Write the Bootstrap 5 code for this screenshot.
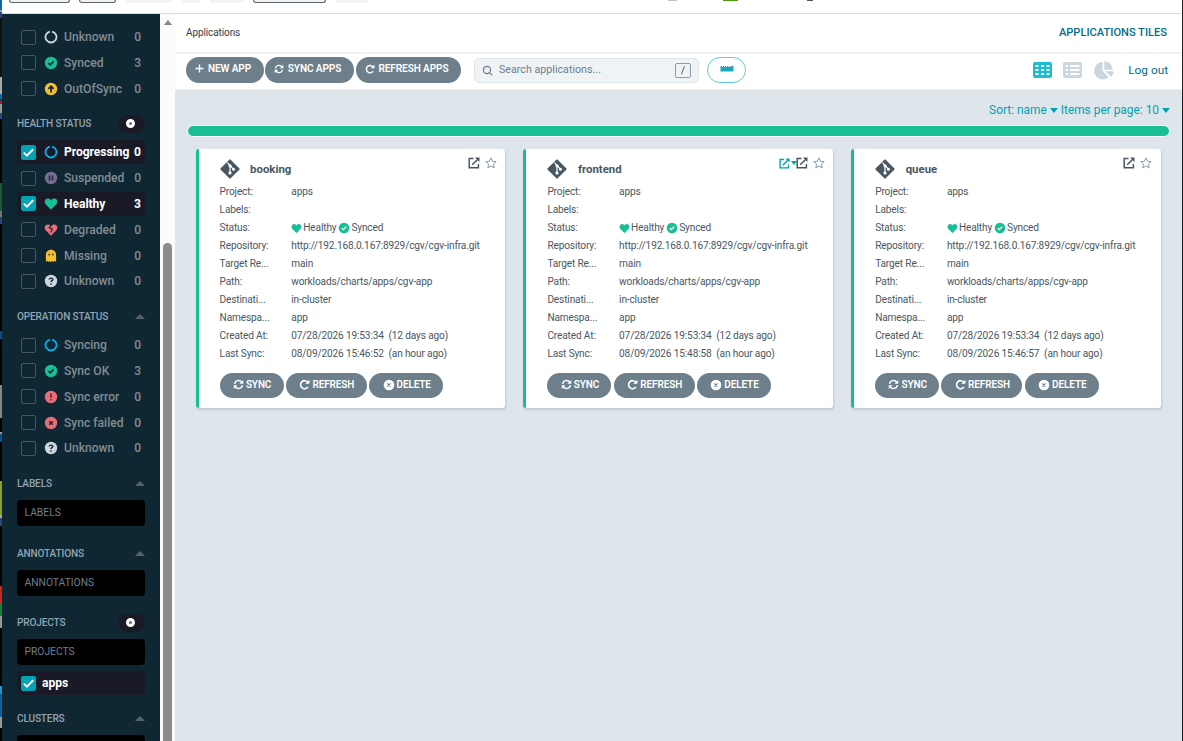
<!DOCTYPE html>
<html lang="en">
<head>
<meta charset="utf-8">
<meta name="viewport" content="width=device-width, initial-scale=1">
<title>Applications Tiles</title>
<link href="https://cdn.jsdelivr.net/npm/bootstrap@5.3.0/dist/css/bootstrap.min.css" rel="stylesheet">
<style>
body{font-family:Roboto,"Liberation Sans",sans-serif;font-size:10.1px;letter-spacing:-.14px;line-height:18px;color:#495763;width:1183px;height:741px;overflow:hidden;background:#fff}
svg{display:block;flex:none;fill:currentColor}
.desk-edge{width:2px;background:linear-gradient(#0a69a8 0 10px,#9aa3ad 10px 12px,#274a7b 12px 18px,#111 18px 77px,#aaa 77px 94px,#0a69a8 94px 99px,#333 99px 101px,#b5124a 101px 104px,#999 104px 113px,#274a7b 113px 119px,#000 119px 183px,#1c5c33 183px 211px,#777 211px 217px,#274a7b 217px 224px,#000 224px 331px,#0a4f8c 331px 339px,#000 339px 385px,#888 385px 418px,#000 418px 432px,#999 432px 434px,#0a4f8c 434px 442px,#000 442px 481px,#8aa02c 481px 515px,#aaa 515px 518px,#274a7b 518px 526px,#000 526px 586px,#c22a1c 586px 604px,#17803a 604px 616px,#999 616px 628px,#000 628px 686px,#2196c4 686px 694px,#0a5fa5 694px 717px,#999 717px 728px,#000 728px)}
.win-edge{width:1px;background:#1d2226}
.tabstrip{height:14px;border-bottom:1px solid #dcdddd}
.chip{height:3px;background:#f1f3f5;border-radius:0 0 6px 6px;flex:none}
.chip.lined{border:1px solid #5c626a;border-top:0}
.side{width:158px;background:#0f2733;padding:11px 15px 0;overflow:hidden;letter-spacing:0}
.side>*{flex:none}
.filter{height:24px;margin-bottom:1.8px;padding:0 4px;border-radius:3px;color:#818d94;font-size:12.1px;font-weight:500;line-height:24px}
.filter.on{background:#1a1a26;color:#fff;font-weight:700;letter-spacing:-.05px}
.filter .box{width:15px;height:15px;border:1px solid #495763;border-radius:2px;flex:none;color:#fff}
.filter.on .box{background:#00a2b3;border-color:#00a2b3}
.filter .ico{margin:0 6px 0 8px;width:14px;height:14px;flex:none}
.side h6{margin:13px 0 7px;height:18px;font-size:10.1px;letter-spacing:-.17px;line-height:18px;font-weight:500;color:#8fa4b1;text-transform:uppercase}
.side h6.far{margin-top:18.4px}
.knob{width:27px;height:18px;border-radius:9px;background:#1a1a26}
.knob i{width:9px;height:9px;border-radius:50%;border:3px solid #fff;background:#6a6a78;margin:0 2px 1px 0}
.caret-up{border:5px solid transparent;border-bottom-color:#56636d;border-top:0;margin-bottom:1px}
.field{height:26px;border-radius:4px;background:#000;color:#6d7f8b;padding:0 7.5px;line-height:25px;font-size:10.3px}
.track{width:15px;background:#fbfbfb}
.arrow{border:4.5px solid transparent;border-bottom:5px solid #858585;border-top:0;margin-top:6px}
.thumb{width:9px;margin-top:218px;background:#8b8b8b;border-radius:5px 5px 0 0}
.head{height:38px;padding:0 15px 0 11px;color:#363c4a}
.crumb{font-size:10px;letter-spacing:-.1px}
.tools{height:38px;border-top:2px solid #eff2f6;border-bottom:1px solid #eaeef2;padding:0 14px 3px 11px}
.pill{background:#6d7f8b;color:#fff;border:0;border-radius:13px;height:26px;font-size:10.1px;letter-spacing:-.12px;font-weight:600;line-height:24px;padding:0 0 2px;display:flex;align-items:center;justify-content:center}
.tools .pill{padding:0 4px 3px 0}
.pill.sm{height:25px;font-size:10px;padding-left:1px}
.search{width:225px;height:25px;border:1px solid #dee6ec;border-radius:5px;background:#eff3f6;color:#6d7f8b;font-size:10.7px;letter-spacing:0;padding:0 7px}
.key{width:16px;height:15px;border:1px solid #8a9ba8;border-radius:2px;line-height:13px;color:#495763}
.ruler{width:39px;height:26px;border:1px solid #5fcbd8;border-radius:13px;color:#18a7bd;background:#fff}
.canvas{background:#dee6ec}
.sortbar{height:33px;color:#00a2b3;font-size:11.9px;letter-spacing:0;padding:7px 12px 0 0;line-height:27px}
.caret-dn{border:4px solid transparent;border-top:5px solid currentColor;border-bottom:0}
.healthbar{height:12px;margin:2px 12px 12px;border:1px solid #fff;border-radius:6px;background:#18be94}
.tiles{padding:0 21px 0 20.6px;gap:18px}
.tile{height:259px;border-left:3px solid #18be94;border-radius:3px;background:#fff;box-shadow:1px 2px 3px rgba(0,0,0,.13);padding:9px 9px 0 21px;position:relative;min-width:0}
.tile-title{font-size:11.4px;letter-spacing:0;font-weight:700;height:22px;color:#495763}
.tile dl{margin:3px 0 0;display:grid;grid-template-columns:71.7px 1fr;grid-auto-rows:18px;height:180px}
.tile dt{font-weight:400}.tile dd{margin:0}
.tile dl *{white-space:nowrap}
.tile-links{position:absolute;top:7px;right:8.6px;height:14px}
</style>
</head>
<body>
<svg width="0" height="0" class="position-absolute">
<symbol id="ring" viewBox="0 0 14 14"><path d="M8 1.6a5.5 5.5 0 1 1-2 0" fill="none" stroke="currentColor" stroke-width="1.8"/></symbol>
<symbol id="ok" viewBox="0 0 14 14"><circle cx="7" cy="7" r="6.2"/><path d="M4.4 7.1l1.8 1.8 3.5-3.5" fill="none" stroke="var(--k,#0f2733)" stroke-width="1.5"/></symbol>
<symbol id="up" viewBox="0 0 14 14"><circle cx="7" cy="7" r="6.2"/><path d="M7 10.5V5M4.4 6.9L7 4.2l2.6 2.7" fill="none" stroke="#0f2733" stroke-width="1.7"/></symbol>
<symbol id="pause" viewBox="0 0 14 14"><circle cx="7" cy="7" r="6.2"/><path d="M4.6 4.6h1.8v4.8H4.6zM7.6 4.6h1.8v4.8H7.6z" fill="#2d2f45"/></symbol>
<symbol id="heart" viewBox="0 0 14 14"><path d="M7 12.7L1.6 7.2C.2 5.7.4 3.2 1.9 2.1 3.4.9 5.5 1.3 7 3c1.5-1.7 3.600-2.100 5.100-.9 1.500 1.100 1.700 3.600.3 5.100z"/></symbol>
<symbol id="broken" viewBox="0 0 14 14"><path d="M7 12.700L1.600 7.200C.2 5.700.4 3.200 1.900 2.100 3.400.9 5.500 1.300 7 3c1.500-1.700 3.600-2.100 5.100-.9 1.500 1.100 1.700 3.600.3 5.100z"/><path d="M7.400 2L5.300 4.800l3 1.500L6.600 9.600" fill="none" stroke="#0f2733" stroke-width="1.100"/></symbol>
<symbol id="ghost" viewBox="0 0 14 14"><path d="M7 .8C4 .8 1.900 3 1.900 5.900v7l1.400-1.100 1.300 1.300L5.800 12 7 13.200 8.200 12l1.200 1.100 1.300-1.300 1.400 1.100v-7C12.100 3 10 .8 7 .8z"/><circle cx="5.200" cy="5.600" r="1" fill="#5c4a1a"/><circle cx="8.800" cy="5.600" r="1" fill="#5c4a1a"/></symbol>
<symbol id="ask" viewBox="0 0 14 14"><circle cx="7" cy="7" r="6.200"/><path d="M5.200 5.500C5.500 3.600 8.900 3.700 8.800 5.600 8.700 6.700 7 6.700 7 8.100M7 9.200v1.500" fill="none" stroke="#0f2733" stroke-width="1.400"/></symbol>
<symbol id="bang" viewBox="0 0 14 14"><circle cx="7" cy="7" r="6.200"/><path d="M7 3.400v4.400M7 8.900v1.600" stroke="#4a2530" stroke-width="1.500"/></symbol>
<symbol id="cross" viewBox="0 0 14 14"><circle cx="7" cy="7" r="6.200"/><path d="M5.200 5.200l3.600 3.600M8.800 5.200L5.200 8.800" stroke="var(--k,#0f2733)" stroke-width="1.300"/></symbol>
<symbol id="tick" viewBox="0 0 13 13"><path d="M1.800 6.600l3.100 3L11.200 3.200" fill="none" stroke="#fff" stroke-width="2"/></symbol>
<symbol id="plus" viewBox="0 0 10 10"><path d="M5 .6v8.800M.6 5h8.800" stroke="currentColor" stroke-width="1.500"/></symbol>
<symbol id="sync" viewBox="0 0 12 12"><path d="M1.700 5.300A4.300 4.300 0 0 1 9.600 3.700M10.300 6.700A4.300 4.300 0 0 1 2.400 8.300" fill="none" stroke="currentColor" stroke-width="1.500"/><path d="M11.200 1v4.200H7zM.8 11V6.800H5z"/></symbol>
<symbol id="redo" viewBox="0 0 12 12"><path d="M9.800 8.600A4.400 4.400 0 1 1 9.500 3.400" fill="none" stroke="currentColor" stroke-width="1.700"/><path d="M11.300.8v4.400H6.900z"/></symbol>
<symbol id="git" viewBox="0 0 20 20"><path d="M10 .9L19.100 10 10 19.100.9 10z" stroke="currentColor" stroke-width="1.200" stroke-linejoin="round"/><path d="M7.400 3.600l2.600 2.700v7.600M10 6.500l3.400 3.600" fill="none" stroke="#fff" stroke-width="1.200"/><circle cx="10" cy="6.700" r="1.500" fill="#fff"/><circle cx="10" cy="13.900" r="1.600" fill="#fff"/><circle cx="13.500" cy="10.200" r="1.500" fill="#fff"/></symbol>
<symbol id="ext" viewBox="0 0 12 12"><path d="M5.500 1.600H1.200v9.200h9.200V7M4.200 7.800l5.600-5.600" fill="none" stroke="currentColor" stroke-width="1.500"/><path d="M7 .5h4.500V5z"/></symbol>
<symbol id="star" viewBox="0 0 12 12"><path d="M6 .9l1.500 3.400 3.700.4-2.800 2.500.8 3.700L6 9l-3.200 1.900.8-3.700L.8 4.700l3.700-.4z" fill="none" stroke="currentColor" stroke-width="1"/></symbol>
</svg>
<div class="d-flex h-100">
  <div class="desk-edge flex-shrink-0"></div>
  <div class="d-flex flex-column flex-grow-1" style="min-width:0">
    <div class="tabstrip d-flex flex-shrink-0">
      <div class="chip lined" style="width:61px;margin-left:7px"></div><div class="chip lined" style="width:37px;margin-left:9px"></div>
      <div class="chip" style="width:47px;margin-left:9px"></div><div class="chip" style="width:19px;margin-left:9px"></div>
      <div class="chip" style="width:35px;margin-left:9px"></div><div class="chip lined" style="width:73px;margin-left:9px"></div>
      <div class="chip" style="width:33px;margin-left:9px"></div>
      <div style="width:9px;height:1px;margin-left:300px;background:#c4c2d0"></div><div style="width:15px;height:1px;margin-left:46px;background:#4c9a12"></div>
      <div style="width:6px;height:1px;margin-left:69px;background:#555"></div>
    </div>
    <div class="d-flex flex-grow-1" style="min-height:0">
      <aside class="side flex-shrink-0 d-flex flex-column" id="side"></aside>
      <div class="track flex-shrink-0 d-flex flex-column align-items-center"><div class="arrow"></div><div class="thumb flex-grow-1"></div></div>
      <main class="flex-grow-1 d-flex flex-column" style="min-width:0">
        <div class="head d-flex align-items-center justify-content-between flex-shrink-0"><span class="crumb">Applications</span><span style="color:#006f8a;font-size:11.1px;letter-spacing:0;font-weight:500">APPLICATIONS TILES</span></div>
        <div class="tools d-flex align-items-center flex-shrink-0">
          <button class="pill gap-1" style="width:78px"><svg width="9" height="9"><use href="#plus"/></svg>NEW APP</button>
          <button class="pill gap-1" style="width:89px;margin-left:1px"><svg width="10" height="10"><use href="#sync"/></svg>SYNC APPS</button>
          <button class="pill gap-1" style="width:105px;margin-left:2px"><svg width="10" height="10"><use href="#redo"/></svg>REFRESH APPS</button>
          <div class="search d-flex align-items-center" style="margin-left:13px"><svg width="11" height="11" viewBox="0 0 11 11"><path d="M7.600 7.600l2.700 2.700M8.600 5a3.600 3.600 0 1 1-7.200 0 3.600 3.600 0 0 1 7.200 0z" fill="none" stroke="currentColor" stroke-width="1.200"/></svg><span style="margin:-1px 0 0 6px">Search applications...</span><span class="key text-center ms-auto">/</span></div>
          <div class="ruler d-flex align-items-center justify-content-center" style="margin-left:8px"><svg width="14" height="6" viewBox="0 0 14 6" style="margin-bottom:3px"><path d="M.5 0h1.500v1h1V0h1v1h1V0h1v1h1V0h1v1h1V0h1v1h1V0h2.500v5q0 .6-.6.6H1.100q-.6 0-.6-.6z"/></svg></div>
          <svg class="ms-auto" width="19" height="16" viewBox="0 0 19 16" style="color:#1bbdd0"><path fill-rule="evenodd" d="M2 0h15a2 2 0 0 1 2 2v12a2 2 0 0 1-2 2H2a2 2 0 0 1-2-2V2a2 2 0 0 1 2-2zM2.500 3v2h3V3zM8 3v2h3V3zM13.500 3v2h3V3zM2.500 7v2h3V7zM8 7v2h3V7zM13.500 7v2h3V7zM2.500 11v2h3v-2zM8 11v2h3v-2zM13.500 11v2h3v-2z"/></svg>
          <svg width="19" height="16" viewBox="0 0 19 16" style="color:#ccd6dd;margin-left:11px"><path fill-rule="evenodd" d="M2 0h15a2 2 0 0 1 2 2v12a2 2 0 0 1-2 2H2a2 2 0 0 1-2-2V2a2 2 0 0 1 2-2zM2.500 3v2h2.500V3zM7 3v2h9.500V3zM2.500 7v2h2.500V7zM7 7v2h9.500V7zM2.500 11v2h2.500v-2zM7 11v2h9.500v-2z"/></svg>
          <svg width="20" height="19" viewBox="0 0 20 19" style="color:#ccd6dd;margin-left:12px"><path d="M8.600 1v8.900l6.100 6.200A8.700 8.700 0 1 1 8.600 1zM10.300.2a8.700 8.700 0 0 1 8.500 8.500h-8.500zM11.500 10.200h8.200a8.700 8.700 0 0 1-2.500 5.500z"/></svg>
          <span style="color:#006f8a;font-size:11.8px;letter-spacing:0;margin-left:14px">Log out</span>
        </div>
        <div class="canvas flex-grow-1">
          <div class="sortbar d-flex justify-content-end align-items-center"><span>Sort: name</span><span class="caret-dn" style="margin:0 3px"></span><span>Items per page: 10</span><span class="caret-dn" style="margin-left:3px"></span></div>
          <div class="healthbar"></div>
          <div class="tiles d-flex" id="tiles"></div>
        </div>
      </main>
    </div>
  </div>
  <div class="win-edge flex-shrink-0"></div>
</div>
<script src="https://cdn.jsdelivr.net/npm/bootstrap@5.3.0/dist/js/bootstrap.bundle.min.js"></script>
<script>
const icon = (id, w, color, h = w) => `<svg width="${w}" height="${h}"${color ? ` style="color:${color}"` : ''}><use href="#${id}"/></svg>`;
const filter = (id, color, name, n, on) => `<div class="filter d-flex align-items-center${on ? ' on' : ''}"><span class="box">${on ? icon('tick', 13) : ''}</span><span class="ico">${icon(id, 14, color)}</span><span>${name}</span><span class="ms-auto">${n}</span></div>`;
const heading = (t, knob, far) => `<h6 class="d-flex align-items-center justify-content-between${far ? ' far' : ''}"><span>${t}</span>${knob ? '<span class="knob d-flex align-items-center justify-content-center"><i></i></span>' : '<span class="caret-up"></span>'}</h6>`;
const field = t => `<div class="field">${t}</div>`;
const green = '#18be94', blue = '#0dadea', red = '#e96d76', pale = '#ccd6dd', gold = '#f4c030';
document.getElementById('side').innerHTML =
  filter('ring', pale, 'Unknown', 0) + filter('ok', green, 'Synced', 3) + filter('up', gold, 'OutOfSync', 0) +
  heading('Health status', true) +
  filter('ring', blue, 'Progressing', 0, true) + filter('pause', '#766f94', 'Suspended', 0) + filter('heart', green, 'Healthy', 3, true) +
  filter('broken', red, 'Degraded', 0) + filter('ghost', gold, 'Missing', 0) + filter('ask', pale, 'Unknown', 0) +
  heading('Operation status') +
  filter('ring', blue, 'Syncing', 0) + filter('ok', green, 'Sync OK', 3) + filter('bang', red, 'Sync error', 0) +
  filter('cross', red, 'Sync failed', 0) + filter('ask', pale, 'Unknown', 0) +
  heading('Labels') + field('LABELS') + heading('Annotations', false, true) + field('ANNOTATIONS') +
  heading('Projects', true, true) + field('PROJECTS') +
  `<div class="filter on d-flex align-items-center" style="margin-top:6.5px"><span class="box">${icon('tick', 13)}</span><span style="margin-left:6px">apps</span></div>` +
  heading('Clusters') + field('');

const apps = [['booking', '15:46:52'], ['frontend', '15:48:58', true], ['queue', '15:46:57']];
document.getElementById('tiles').innerHTML = apps.map(([name, time, link]) => {
  const rows = [['Project:', 'apps'], ['Labels:', ''],
    ['Status:', `<span class="d-flex align-items-center" style="--k:#fff">${icon('heart', 11, green)}<span style="margin:0 2px 0 1px">Healthy</span>${icon('ok', 12, green)}<span style="margin-left:1px">Synced</span></span>`],
    ['Repository:', 'http://192.168.0.167:8929/cgv/cgv-infra.git'], ['Target Re...', 'main'], ['Path:', 'workloads/charts/apps/cgv-app'],
    ['Destinati...', 'in-cluster'], ['Namespa...', 'app'], ['Created At:', '07/28/2026 19:53:34&nbsp; (12 days ago)'], ['Last Sync:', `08/09/2026 ${time}&nbsp; (an hour ago)`]];
  return `<section class="tile flex-fill w-100">
    <div class="tile-title d-flex align-items-center">${icon('git', 20)}<span style="margin-left:10.500px">${name}</span></div>
    <div class="tile-links d-flex align-items-center">${link ? icon('ext', 11, '#00a2b3') + '<span class="caret-dn" style="color:#00a2b3;margin-left:1px;margin-right:-1px;border-width:4px 3.5px 0"></span>' : ''}${icon('ext', 12)}<span style="margin-left:5px">${icon('star', 12, '#8a9ba8')}</span></div>
    <dl>${rows.map(([k, v]) => `<dt>${k}</dt><dd>${v}</dd>`).join('')}</dl>
    <div class="d-flex" style="gap:2.3px;margin-top:10px">
      <button class="pill sm" style="width:64px;gap:2px">${icon('sync', 11)}SYNC</button>
      <button class="pill sm" style="width:81px;gap:2px">${icon('redo', 11)}REFRESH</button>
      <button class="pill sm" style="width:74px;gap:2px;--k:#6d7f8b">${icon('cross', 12)}DELETE</button>
    </div></section>`;
}).join('');
</script>
</body>
</html>
